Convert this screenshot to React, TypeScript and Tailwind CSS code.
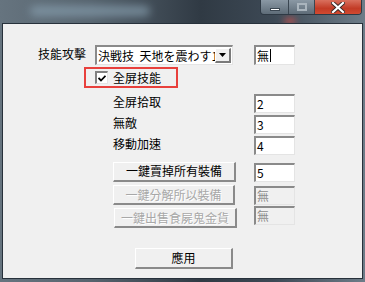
import React from 'react';

const font = { fontFamily: '"Noto Sans CJK TC", "Noto Sans CJK JP", "Liberation Sans", sans-serif' };

const Sunken = ({ children, disabled, className = '' }: { children?: React.ReactNode; disabled?: boolean; className?: string }) => (
  <div
    className={
      'flex items-center border-t-2 border-l-2 border-t-[#8a8a8a] border-l-[#8a8a8a] border-b border-r border-b-[#e4e4e4] border-r-[#e4e4e4] ' +
      (disabled ? 'bg-[#f0f0f0] text-[#8d8d8d] ' : 'bg-white text-black ') +
      className
    }
  >
    {children}
  </div>
);

const Button = ({ label, disabled, className = '' }: { label: string; disabled?: boolean; className?: string }) => (
  <div
    className={
      'flex items-center justify-center bg-[#f0f0f0] border-t border-l border-t-white border-l-white border-b-2 border-r-2 border-b-[#8a8a8a] border-r-[#8a8a8a] text-[12px] leading-none ' +
      className
    }
  >
    <span className={disabled ? 'text-[#a8a8a8] [text-shadow:1px_1px_0_#ffffff]' : 'text-black'}>{label}</span>
  </div>
);

const Row = ({ label, value }: { label: string; value: string }) => (
  <div className="flex items-center h-[19px] mt-[2px] pl-[110px]">
    <span className="w-[141px] text-[12px] leading-none -mt-[4px]">{label}</span>
    <Sunken className="w-[41px] h-[19px] pl-[1px] text-[12px] leading-none">{value}</Sunken>
  </div>
);

export default function App() {
  return (
    <div className="w-[365px] h-[282px] overflow-hidden bg-[linear-gradient(90deg,#66747f_0%,#56636e_25%,#303a44_55%,#3d4955_75%,#6d7c88_100%)] relative" style={font}>
      {/* blurred highlight behind title */}
      <div className="absolute left-[30px] top-[6px] w-[120px] h-[10px] rounded-full bg-[#8aa2b2] opacity-70 blur-[4px]" />
      <div className="absolute left-[284px] top-[18px] w-[12px] h-[6px] rounded-full bg-[#e0504a] opacity-70 blur-[3px]" />

      {/* title bar */}
      <div className="relative h-[23px] flex justify-end pr-[3px]">
        <div className="flex h-[15px] border border-t-0 border-[#2e3944] rounded-b-[4px] overflow-hidden">
          <div className="w-[28px] h-full flex items-end justify-center pb-[3px] bg-[linear-gradient(180deg,#8a98a4,#5e6c78)] border-r border-[#3a4651]">
            <div className="w-[10px] h-[3px] bg-white border border-[#3a4651]" />
          </div>
          <div className="w-[26px] h-full flex items-center justify-center bg-[linear-gradient(180deg,#8a98a4,#5e6c78)] border-r border-[#3a4651]">
            <div className="w-[10px] h-[8px] border-2 border-[#a9b4bd] bg-transparent" />
          </div>
          <div className="w-[46px] h-full flex items-center justify-center bg-[linear-gradient(180deg,#d9705e,#c23b26_60%,#d24a30)]">
            <svg width="14" height="11" viewBox="0 0 14 11">
              <path d="M2 1 L12 10 M12 1 L2 10" stroke="#3a2a28" strokeWidth="4" strokeLinecap="square" />
              <path d="M2 1 L12 10 M12 1 L2 10" stroke="#ffffff" strokeWidth="2.2" strokeLinecap="square" />
            </svg>
          </div>
        </div>
      </div>

      {/* client area */}
      <div className="relative ml-[2px] w-[361px] h-[256px] border border-[#27313b] bg-[#f0f0f0] text-black">
        <div className="flex flex-col pt-[21px]">
          {/* skill attack row */}
          <div className="flex items-center h-[20px]">
            <span className="pl-[35px] w-[92px] text-[12px] leading-none -mt-[3px]">技能攻擊</span>
            <Sunken className="w-[138px] h-[20px] overflow-hidden">
              <span className="flex-1 whitespace-nowrap overflow-hidden text-[12px] leading-none pl-[1px]">決戦技&nbsp;&nbsp;天地を震わす1</span>
              <div className="w-[16px] h-[15px] mr-[1px] flex items-center justify-center bg-[#f0f0f0] border-t border-l border-t-white border-l-white border-b-2 border-r-2 border-b-[#7a7a7a] border-r-[#7a7a7a]">
                <svg width="7" height="4" viewBox="0 0 7 4"><path d="M0 0 H7 L3.5 4 Z" fill="#000" /></svg>
              </div>
            </Sunken>
            <Sunken className="ml-[21px] w-[41px] h-[20px] pl-[1px] text-[12px] leading-none">
              <span>無</span>
              <span className="w-[1px] h-[13px] bg-black ml-[1px]" />
            </Sunken>
          </div>

          {/* full screen skill checkbox */}
          <div className="mt-[2px] ml-[81px] w-[94px] h-[21px] border-2 border-[#e8403c] flex items-center pl-[9px]">
            <div className="w-[13px] h-[13px] bg-white border-t-2 border-l-2 border-t-[#808080] border-l-[#808080] border-b border-r border-b-[#e4e4e4] border-r-[#e4e4e4] flex items-center justify-center">
              <svg width="8" height="7" viewBox="0 0 8 7">
                <path d="M0.5 3 L3 5.5 L7.5 0.8" stroke="#000" strokeWidth="1.8" fill="none" />
              </svg>
            </div>
            <span className="ml-[5px] text-[12px] leading-none">全屏技能</span>
          </div>

          <div className="mt-[4px]" />
          <Row label="全屏拾取" value="2" />
          <Row label="無敵" value="3" />
          <Row label="移動加速" value="4" />

          <div className="flex items-center mt-[6px] pl-[110px]">
            <Button label="一鍵賣掉所有裝備" className="w-[123px] h-[20px]" />
            <Sunken className="ml-[18px] mt-[2px] w-[41px] h-[19px] pl-[1px] text-[12px] leading-none">5</Sunken>
          </div>
          <div className="flex items-center mt-[3px] pl-[110px]">
            <Button label="一鍵分解所以裝備" disabled className="w-[122px] h-[20px]" />
            <Sunken disabled className="ml-[19px] w-[41px] h-[19px] pl-[1px] text-[12px] leading-none">無</Sunken>
          </div>
          <div className="flex items-start mt-[3px] pl-[111px]">
            <Button label="一鍵出售食屍鬼金貨" disabled className="w-[123px] h-[20px]" />
            <Sunken disabled className="ml-[17px] -mt-[2px] w-[41px] h-[19px] pl-[1px] text-[12px] leading-none">無</Sunken>
          </div>

          <div className="mt-[20px] pl-[132px]">
            <Button label="應用" className="w-[98px] h-[21px]" />
          </div>
        </div>
      </div>
    </div>
  );
}
